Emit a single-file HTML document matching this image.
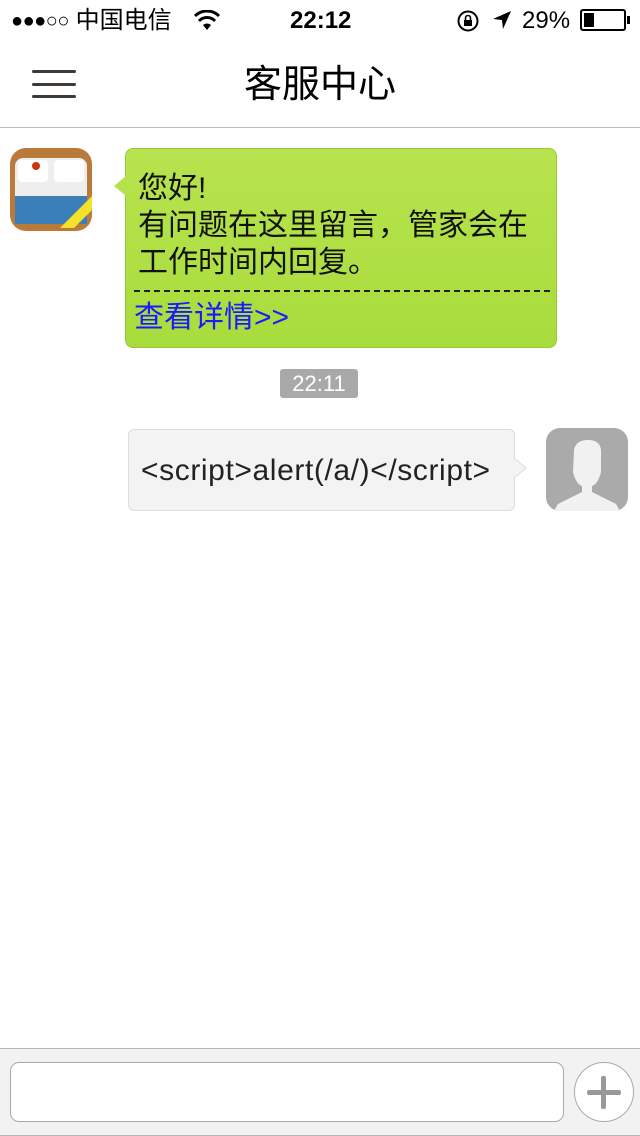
<!DOCTYPE html>
<html><head><meta charset="utf-8">
<style>
*{margin:0;padding:0;box-sizing:border-box}
body{width:640px;height:1136px;background:#fff;font-family:"Liberation Sans","Noto Sans CJK SC",sans-serif;position:relative;overflow:hidden;color:#000}
.abs{position:absolute}
</style></head><body>
<!-- status bar -->
<div class="abs" style="left:11px;top:6px;font-size:24px;line-height:30px;white-space:nowrap"><span style="font-size:20px;letter-spacing:-0.5px;vertical-align:1px">●●●○○</span> 中国电信</div>
<svg class="abs" style="left:194px;top:10px" width="26" height="22" viewBox="0 0 26 22"><path d="M13 20 L9 15 A6 6 0 0 1 17 15 Z" fill="#000"/><path d="M5 11 A11 11 0 0 1 21 11" stroke="#000" stroke-width="3" fill="none"/><path d="M1 6 A17 17 0 0 1 25 6" stroke="#000" stroke-width="3" fill="none"/></svg>
<div class="abs" style="left:290px;top:6px;font-size:24px;font-weight:bold;line-height:30px">22:12</div>
<svg class="abs" style="left:456px;top:9px" width="24" height="24" viewBox="0 0 24 24"><circle cx="12" cy="12" r="9.5" stroke="#000" stroke-width="2" fill="none"/><rect x="8" y="11" width="8" height="6" fill="#000"/><path d="M9.5 11 V9 a2.5 2.5 0 0 1 5 0 V11" stroke="#000" stroke-width="1.6" fill="none"/></svg>
<svg class="abs" style="left:492px;top:10px" width="20" height="20" viewBox="0 0 20 20"><path d="M19 1 L1 9 L10 10 L11 19 Z" fill="#000"/></svg>
<div class="abs" style="left:522px;top:6px;font-size:24px;line-height:30px">29%</div>
<div class="abs" style="left:580px;top:9px;width:46px;height:22px;border:2px solid #000;border-radius:3px"><div style="margin:2px;width:10px;height:14px;background:#000"></div></div>
<div class="abs" style="left:627px;top:16px;width:3px;height:8px;background:#000"></div>
<!-- nav -->
<div class="abs" style="left:32px;top:70px;width:44px;height:3px;background:#3f3a36;border-radius:2px"></div>
<div class="abs" style="left:32px;top:83px;width:44px;height:3px;background:#3f3a36;border-radius:2px"></div>
<div class="abs" style="left:32px;top:95px;width:44px;height:3px;background:#3f3a36;border-radius:2px"></div>
<div class="abs" style="left:0;width:640px;top:62px;text-align:center;font-size:38px;line-height:46px">客服中心</div>
<div class="abs" style="left:0;top:127px;width:640px;height:1px;background:#bdbdbd"></div>
<!-- hotel icon -->
<svg class="abs" style="left:10px;top:148px" width="82" height="83" viewBox="0 0 82 83">
<defs><clipPath id="c"><rect width="82" height="83" rx="16"/></clipPath></defs>
<g clip-path="url(#c)"><rect width="82" height="83" fill="#b97a3a"/>
<rect x="5" y="10" width="72" height="66" rx="8" fill="#eee"/>
<rect x="8" y="12" width="30" height="22" rx="4" fill="#fff"/><rect x="44" y="12" width="30" height="22" rx="4" fill="#fff"/>
<rect x="5" y="48" width="72" height="28" fill="#3a7fb8"/>
<path d="M50 80 L82 48 L82 62 L64 80 Z" fill="#f4e12a"/>
<circle cx="26" cy="18" r="4" fill="#c31"/></g></svg>
<!-- green bubble -->
<div class="abs" style="left:125px;top:148px;width:432px;height:200px;border-radius:8px;background:linear-gradient(#b8e34e,#a8dc3c);border:1px solid #96c83a"></div>
<svg class="abs" style="left:113px;top:176px" width="14" height="20"><path d="M13 0 L1 10 L13 20 Z" fill="#b5e24b"/></svg>
<div class="abs" style="left:138px;top:170px;font-size:30px;line-height:37px;color:#111;white-space:nowrap">您好!<br>有问题在这里留言，管家会在<br>工作时间内回复。</div>
<div class="abs" style="left:134px;top:290px;width:416px;border-top:2px dashed #222"></div>
<div class="abs" style="left:134px;top:300px;font-size:30px;line-height:36px;color:#1a1aff">查看详情&gt;&gt;</div>
<!-- time -->
<div class="abs" style="left:280px;top:369px;width:78px;height:29px;background:#a9a9a9;border-radius:3px;color:#fff;font-size:22px;line-height:29px;text-align:center">22:11</div>
<!-- gray bubble -->
<div class="abs" style="left:128px;top:429px;width:387px;height:82px;border-radius:6px;background:#f3f3f3;border:1px solid #ddd"></div>
<svg class="abs" style="left:514px;top:458px" width="14" height="20"><path d="M0 0 L12 10 L0 20 Z" fill="#f3f3f3"/><path d="M0 0 L12 10 L0 20" stroke="#ddd" fill="none"/></svg>
<div class="abs" style="left:141px;top:453px;font-size:30px;line-height:36px;color:#222;letter-spacing:0.6px;white-space:nowrap">&lt;script&gt;alert(/a/)&lt;/script&gt;</div>
<!-- avatar -->
<svg class="abs" style="left:546px;top:428px" width="82" height="83" viewBox="0 0 82 83">
<rect width="82" height="83" rx="14" fill="#aaa"/>
<path d="M28 22 Q30 12 42 12 Q54 12 55 22 L55 44 Q52 56 46 58 L46 64 Q58 70 70 76 L74 83 L8 83 L12 76 Q24 70 36 64 L36 58 Q30 56 27 44 Z" fill="#f1f1f1"/></svg>
<!-- bottom bar -->
<div class="abs" style="left:0;top:1048px;width:640px;height:88px;background:#f2f2f2;border-top:1px solid #b5b5b5;border-bottom:1px solid #b5b5b5"></div>
<div class="abs" style="left:10px;top:1062px;width:554px;height:60px;background:#fff;border:1px solid #aaa;border-radius:9px"></div>
<div class="abs" style="left:574px;top:1062px;width:60px;height:60px;background:#fff;border:1px solid #aaa;border-radius:50%"></div>
<div class="abs" style="left:587px;top:1090px;width:34px;height:5px;background:#999;border-radius:2px"></div>
<div class="abs" style="left:601px;top:1076px;width:5px;height:33px;background:#999;border-radius:2px"></div>
</body></html>
